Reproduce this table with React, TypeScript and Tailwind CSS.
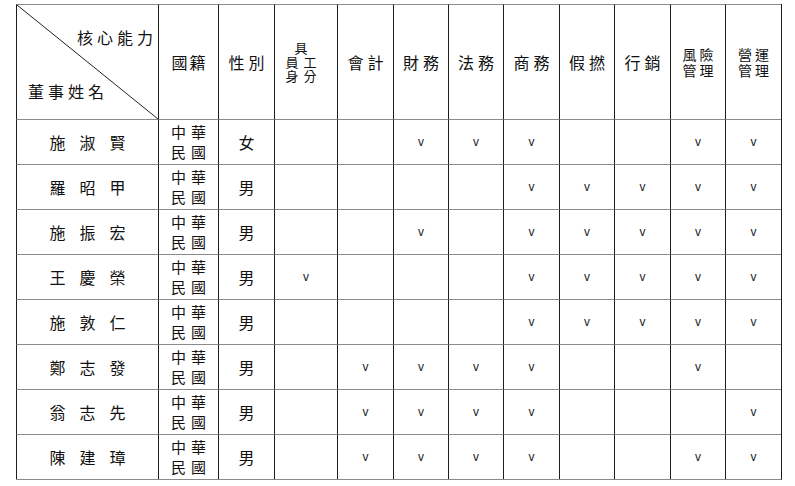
import React from "react";

const gridCols =
  "grid grid-cols-[142px_60px_56px_63px_56px_55px_55px_56px_55px_56px_55px_56px]";

const rows: { name: string; sex: string; marks: number[] }[] = [
  { name: "施淑賢", sex: "女", marks: [2, 3, 4, 7, 8] },
  { name: "羅昭甲", sex: "男", marks: [4, 5, 6, 7, 8] },
  { name: "施振宏", sex: "男", marks: [2, 4, 5, 6, 7, 8] },
  { name: "王慶榮", sex: "男", marks: [0, 4, 5, 6, 7, 8] },
  { name: "施敦仁", sex: "男", marks: [4, 5, 6, 7, 8] },
  { name: "鄭志發", sex: "男", marks: [1, 2, 3, 4, 7] },
  { name: "翁志先", sex: "男", marks: [1, 2, 3, 4, 8] },
  { name: "陳建璋", sex: "男", marks: [1, 2, 3, 4, 7, 8] },
];

const cell =
  "border-l border-t border-l-[#1c1c1c] border-t-[#8a8a8a] flex items-center justify-center";

function Chars({ text, gap }: { text: string; gap: string }) {
  return (
    <div className={`flex ${gap}`}>
      {text.split("").map((c, i) => (
        <span key={i}>{c}</span>
      ))}
    </div>
  );
}

export default function App() {
  return (
    <div
      className="w-[795px] h-[486px] bg-white pt-[4px] pl-[16px] text-[#111]"
      style={{ fontFamily: '"Noto Sans CJK TC", "Noto Sans CJK SC", sans-serif' }}
    >
      <div className={`${gridCols} w-[766px] border-r border-b border-r-[#1c1c1c] border-b-[#8a8a8a]`}>
        {/* header */}
        <div className={`${cell} relative h-[115px] !block text-[16px] leading-none`}>
          <svg className="absolute inset-0" width="141" height="114" viewBox="0 0 141 114">
            <line x1="0" y1="0" x2="141" y2="114" stroke="#222" strokeWidth="1" />
          </svg>
          <div className="absolute right-[5px] top-[24px]">
            <Chars text="核心能力" gap="gap-[4px]" />
          </div>
          <div className="absolute left-[11px] top-[78px]">
            <Chars text="董事姓名" gap="gap-[4px]" />
          </div>
        </div>
        <div className={`${cell} h-[115px] text-[16px]`}>
          <Chars text="國籍" gap="gap-[2px]" />
        </div>
        <div className={`${cell} h-[115px] text-[16px]`}>
          <Chars text="性別" gap="gap-[4px]" />
        </div>
        <div className={`${cell} h-[115px] text-[13px] leading-[14px] pr-[10px]`}>
          <div className="flex flex-col items-center">
            <span>具</span>
            <Chars text="員工" gap="gap-[5px]" />
            <Chars text="身分" gap="gap-[5px]" />
          </div>
        </div>
        {["會計", "財務", "法務", "商務", "假撚", "行銷"].map((t) => (
          <div key={t} className={`${cell} h-[115px] text-[16px]`}>
            <Chars text={t} gap="gap-[4px]" />
          </div>
        ))}
        {[
          ["風險", "管理"],
          ["營運", "管理"],
        ].map(([a, b], i) => (
          <div key={i} className={`${cell} h-[115px] text-[14px] leading-[16px]`}>
            <div className="flex flex-col items-center">
              <Chars text={a} gap="gap-[3px]" />
              <Chars text={b} gap="gap-[3px]" />
            </div>
          </div>
        ))}

        {/* body */}
        {rows.map((r) => (
          <React.Fragment key={r.name}>
            <div className={`${cell} h-[45px] text-[16px]`}>
              <Chars text={r.name} gap="gap-[14px]" />
            </div>
            <div className={`${cell} h-[45px] text-[15px] leading-[20px]`}>
              <div className="flex flex-col items-center">
                <Chars text="中華" gap="gap-[5px]" />
                <Chars text="民國" gap="gap-[5px]" />
              </div>
            </div>
            <div className={`${cell} h-[45px] text-[16px]`}>{r.sex}</div>
            {Array.from({ length: 9 }).map((_, i) => (
              <div
                key={i}
                className={`${cell} h-[45px] text-[12px] text-[#222]`}
                style={{ fontFamily: '"Liberation Sans", Arial, sans-serif' }}
              >
                {r.marks.includes(i) ? "v" : ""}
              </div>
            ))}
          </React.Fragment>
        ))}
      </div>
    </div>
  );
}
